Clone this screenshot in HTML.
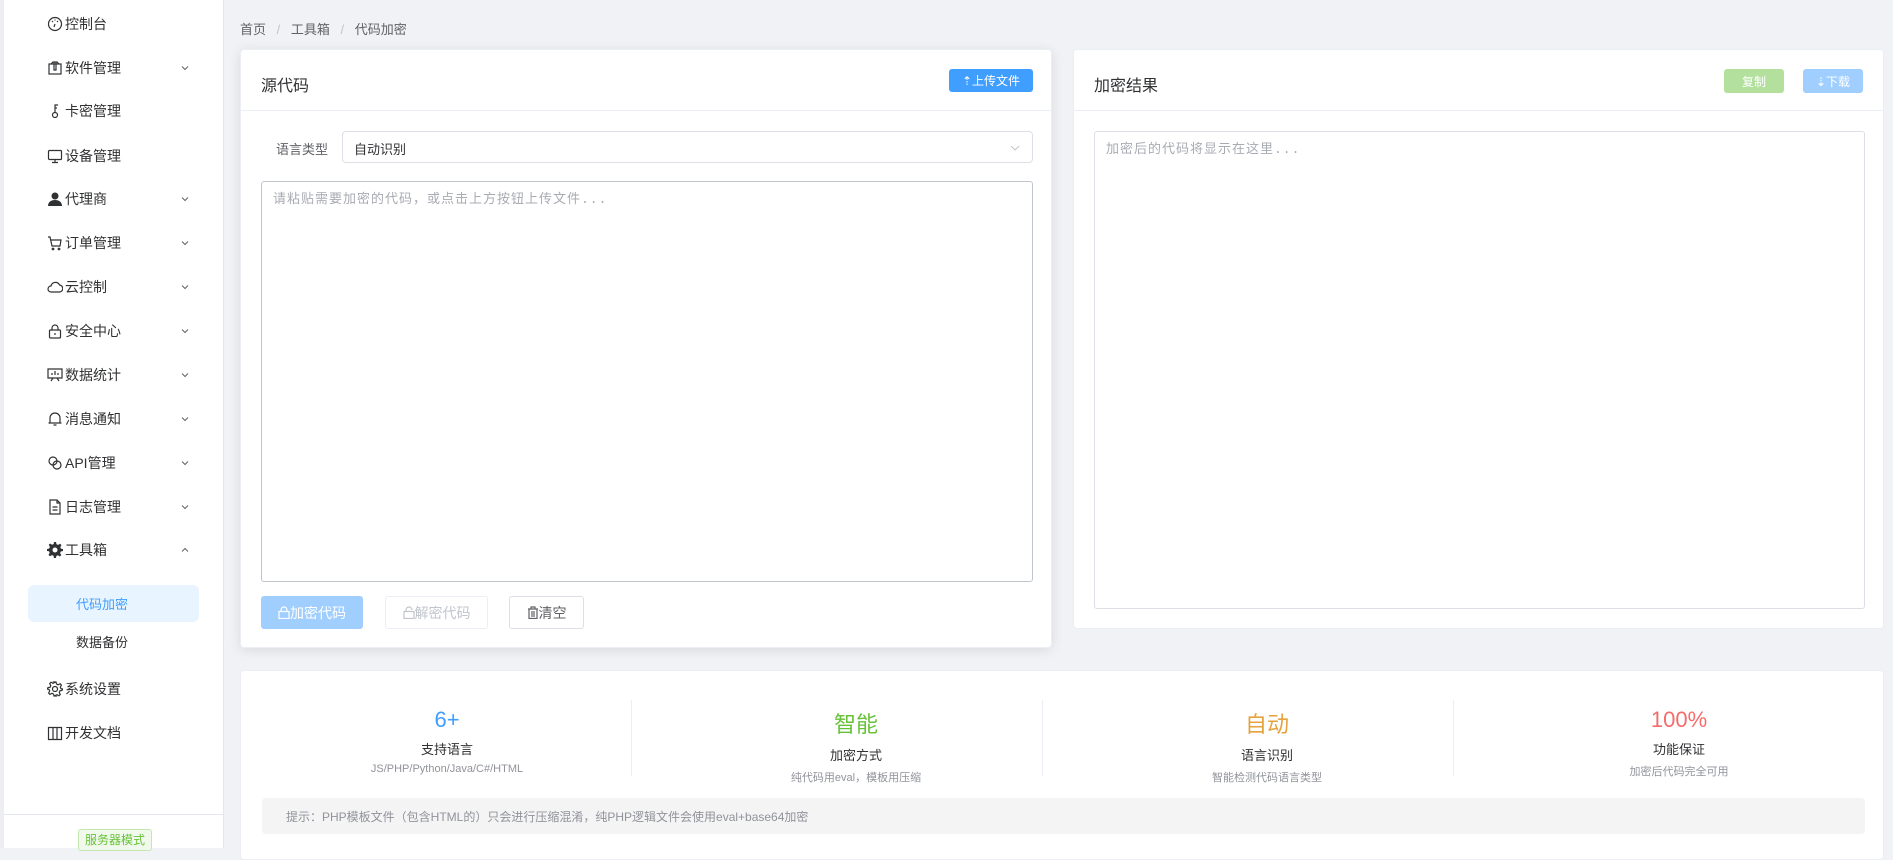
<!DOCTYPE html>
<html><head><meta charset="utf-8"><style>
*{box-sizing:border-box;margin:0;padding:0}
body{width:1893px;height:848px;overflow:hidden;background:#f0f2f5;font-family:"Liberation Sans","Noto Sans CJK SC",sans-serif;color:#303133;position:relative;font-size:14px}
.side{position:absolute;left:0;top:0;width:224px;height:848px;background:#fff;border-left:4px solid #eceef2;border-right:1px solid #e6e6e6}
.mi{position:absolute;left:0;width:220px;height:40px;display:flex;align-items:center}
.mi svg{position:absolute;left:43px;width:16px;height:16px}
.mi span{position:absolute;left:61px;font-size:14px;color:#303133}
.mi .ch{position:absolute;left:176px;width:10px;height:10px}
.abs{position:absolute}
.card{position:absolute;background:#fff;border:1px solid #ebeef5;border-radius:4px}
.btn{position:absolute;border-radius:3px;font-size:12px;display:flex;align-items:center;justify-content:center}
.stat{position:absolute;width:400px;text-align:center}
.stat .n{font-size:22px}
.stat .l{font-size:13px;color:#303133;margin-top:6px}
.stat .s{font-size:11px;color:#909399;margin-top:5px}
.vd{position:absolute;top:700px;width:1px;height:76px;background:#ebeef5}
</style></head><body>
<div class="side">
<div class="mi" style="top:4px"><svg viewBox="0 0 16 16" fill="none" stroke="#303133" stroke-width="1.2"><circle cx="8" cy="8" r="6.5"/><path d="M8 8l-1 3M5 5l1 1M8 3.5v1M11 5l-1 1"/></svg><span>控制台</span></div>
<div class="mi" style="top:48px"><svg viewBox="0 0 16 16" fill="none" stroke="#303133" stroke-width="1.2"><rect x="2" y="4" width="12" height="10"/><path d="M4 4l2-2h4l2 2M7 2v8h2V2"/></svg><span>软件管理</span><svg class="ch" viewBox="0 0 10 10" fill="none" stroke="#606266"><path d="M2 3.5l3 3 3-3"/></svg></div>
<div class="mi" style="top:91px"><svg viewBox="0 0 16 16" fill="none" stroke="#303133" stroke-width="1.2"><circle cx="8" cy="12" r="2.5"/><path d="M8 9.5V2h3M8 5h2"/></svg><span>卡密管理</span></div>
<div class="mi" style="top:136px"><svg viewBox="0 0 16 16" fill="none" stroke="#303133" stroke-width="1.2"><rect x="1.5" y="2.5" width="13" height="9" rx="1"/><path d="M8 11.5v3M5 14.5h6"/></svg><span>设备管理</span></div>
<div class="mi" style="top:179px"><svg viewBox="0 0 16 16" fill="#303133"><circle cx="8" cy="5" r="3.5"/><path d="M1 15c0-4 3-6 7-6s7 2 7 6z"/></svg><span>代理商</span><svg class="ch" viewBox="0 0 10 10" fill="none" stroke="#606266"><path d="M2 3.5l3 3 3-3"/></svg></div>
<div class="mi" style="top:223px"><svg viewBox="0 0 16 16" fill="none" stroke="#303133" stroke-width="1.2"><path d="M1 2h2l2 9h8l1-6H4"/><circle cx="6" cy="14" r=".8"/><circle cx="12" cy="14" r=".8"/></svg><span>订单管理</span><svg class="ch" viewBox="0 0 10 10" fill="none" stroke="#606266"><path d="M2 3.5l3 3 3-3"/></svg></div>
<div class="mi" style="top:267px"><svg viewBox="0 0 16 16" fill="none" stroke="#303133" stroke-width="1.2"><path d="M4 13a3 3 0 010-6 4.5 4.5 0 018.5-1A3.5 3.5 0 0112 13z"/></svg><span>云控制</span><svg class="ch" viewBox="0 0 10 10" fill="none" stroke="#606266"><path d="M2 3.5l3 3 3-3"/></svg></div>
<div class="mi" style="top:311px"><svg viewBox="0 0 16 16" fill="none" stroke="#303133" stroke-width="1.2"><rect x="2.5" y="7" width="11" height="8" rx="1"/><path d="M5 7V5a3 3 0 016 0v2M8 10v2"/></svg><span>安全中心</span><svg class="ch" viewBox="0 0 10 10" fill="none" stroke="#606266"><path d="M2 3.5l3 3 3-3"/></svg></div>
<div class="mi" style="top:355px"><svg viewBox="0 0 16 16" fill="none" stroke="#303133" stroke-width="1.2"><path d="M1 2h14v9H1zM4 14l2-3M12 14l-2-3M5 8V6M8 8V4M11 8V6"/></svg><span>数据统计</span><svg class="ch" viewBox="0 0 10 10" fill="none" stroke="#606266"><path d="M2 3.5l3 3 3-3"/></svg></div>
<div class="mi" style="top:399px"><svg viewBox="0 0 16 16" fill="none" stroke="#303133" stroke-width="1.2"><path d="M3 12V7a5 5 0 0110 0v5zM1.5 12h13M6.5 14h3"/></svg><span>消息通知</span><svg class="ch" viewBox="0 0 10 10" fill="none" stroke="#606266"><path d="M2 3.5l3 3 3-3"/></svg></div>
<div class="mi" style="top:443px"><svg viewBox="0 0 16 16" fill="none" stroke="#303133" stroke-width="1.2"><circle cx="6" cy="6" r="4"/><circle cx="10" cy="10" r="4"/></svg><span>API管理</span><svg class="ch" viewBox="0 0 10 10" fill="none" stroke="#606266"><path d="M2 3.5l3 3 3-3"/></svg></div>
<div class="mi" style="top:487px"><svg viewBox="0 0 16 16" fill="none" stroke="#303133" stroke-width="1.2"><path d="M3 1h7l3 3v11H3zM10 1v3h3M5.5 8h5M5.5 11h5"/></svg><span>日志管理</span><svg class="ch" viewBox="0 0 10 10" fill="none" stroke="#606266"><path d="M2 3.5l3 3 3-3"/></svg></div>
<div class="mi" style="top:530px"><svg viewBox="0 0 16 16" fill="#303133"><path d="M7 0h2l.5 2.2 1.6.7 2-1.2 1.4 1.4-1.2 2 .7 1.6L16 7v2l-2.2.5-.7 1.6 1.2 2-1.4 1.4-2-1.2-1.6.7L9 16H7l-.5-2.2-1.6-.7-2 1.2-1.4-1.4 1.2-2-.7-1.6L0 9V7l2.2-.5.7-1.6-1.2-2 1.4-1.4 2 1.2 1.6-.7z"/><circle cx="8" cy="8" r="2.5" fill="#fff"/></svg><span>工具箱</span><svg class="ch" viewBox="0 0 10 10" fill="none" stroke="#606266"><path d="M2 6.5l3-3 3 3"/></svg></div>
<div class="abs" style="left:24px;top:585px;width:171px;height:37px;background:#e8f4ff;border-radius:6px"></div>
<div class="abs" style="left:72px;top:594px;font-size:13px;color:#409eff">代码加密</div>
<div class="abs" style="left:72px;top:632px;font-size:13px;color:#303133">数据备份</div>
<div class="mi" style="top:669px"><svg viewBox="0 0 16 16" fill="none" stroke="#303133" stroke-width="1.2"><circle cx="8" cy="8" r="2.5"/><path d="M7 1h2l.5 2 1.6.8 2-1.1 1.3 1.4-1.1 2 .7 1.6L16 8l-1.1 1.4-2 .4-.7 1.6 1.1 2-1.3 1.4-2-1.1-1.6.7L9 15H7l-.5-2-1.6-.7-2 1.1-1.3-1.4 1.1-2-.7-1.6L0 8l1.1-1.4 2-.4.7-1.6-1.1-2 1.3-1.4 2 1.1 1.6-.8z"/></svg><span>系统设置</span></div>
<div class="mi" style="top:713px"><svg viewBox="0 0 16 16" fill="none" stroke="#303133" stroke-width="1.2"><path d="M1.5 2.5h13v12h-13zM6 2.5v12M10 2.5v12"/></svg><span>开发文档</span></div>
<div class="abs" style="left:0;top:814px;width:220px;height:1px;background:#e4e7ed"></div>
<div class="abs" style="left:74px;top:829px;width:74px;height:22px;background:#f0f9eb;border:1px solid #c2e7b0;border-radius:3px;color:#67c23a;font-size:12px;text-align:center;line-height:20px">服务器模式</div>
</div>

<div class="abs" style="left:240px;top:19px;font-size:13px;color:#606266">首页 <span style="color:#c0c4cc;margin:0 7px">/</span> 工具箱 <span style="color:#c0c4cc;margin:0 7px">/</span> 代码加密</div>

<div class="card" style="left:240px;top:49px;width:812px;height:599px;box-shadow:0 2px 12px rgba(0,0,0,.1)">
<div class="abs" style="left:0;top:60px;width:100%;height:1px;background:#ebeef5"></div>
<div class="abs" style="left:20px;top:22px;font-size:16px">源代码</div>
<div class="btn" style="left:708px;top:19px;width:84px;height:23px;background:#409eff;color:#fff">⇡上传文件</div>
<div class="abs" style="left:35px;top:89px;font-size:13px;color:#606266">语言类型</div>
<div class="abs" style="left:101px;top:81px;width:691px;height:32px;border:1px solid #dcdfe6;border-radius:4px;font-size:13px;padding:7px 11px;color:#303133">自动识别<svg style="position:absolute;right:12px;top:11px" width="10" height="10" viewBox="0 0 10 10" fill="none" stroke="#c0c4cc"><path d="M1 3l4 4 4-4"/></svg></div>
<div class="abs" style="left:20px;top:131px;width:772px;height:401px;border:1px solid #c0c4cc;border-radius:3px;font-family:'Liberation Mono','Noto Sans CJK SC',monospace;font-size:13px;letter-spacing:1px;color:#a8abb2;padding:6px 11px">请粘贴需要加密的代码，或点击上方按钮上传文件...</div>
<div class="btn" style="left:20px;top:546px;width:102px;height:33px;background:#a0cfff;color:#fff;font-size:14px"><svg width="12" height="13" viewBox="0 0 12 13" fill="none" stroke="#fff" stroke-width="1.2"><rect x="1" y="5.5" width="10" height="7"/><path d="M3 5.5V4a3 3 0 016 0v1.5"/></svg>加密代码</div>
<div class="btn" style="left:144px;top:546px;width:103px;height:33px;border:1px solid #ebeef5;color:#c0c4cc;font-size:14px"><svg width="12" height="13" viewBox="0 0 12 13" fill="none" stroke="#c0c4cc" stroke-width="1.2"><rect x="1" y="5.5" width="10" height="7"/><path d="M3 5.5V4a3 3 0 016 0"/></svg>解密代码</div>
<div class="btn" style="left:268px;top:546px;width:75px;height:33px;border:1px solid #dcdfe6;color:#606266;font-size:14px"><svg width="12" height="13" viewBox="0 0 12 13" fill="none" stroke="#606266" stroke-width="1.2"><path d="M1 3h10M4 3V1h4v2M2 3v9.5h8V3M5 5v6M7 5v6"/></svg>清空</div>
</div>

<div class="card" style="left:1073px;top:49px;width:811px;height:580px">
<div class="abs" style="left:0;top:60px;width:100%;height:1px;background:#ebeef5"></div>
<div class="abs" style="left:20px;top:22px;font-size:16px">加密结果</div>
<div class="btn" style="left:650px;top:19px;width:60px;height:24px;background:#b3e19d;color:#fff">复制</div>
<div class="btn" style="left:729px;top:19px;width:60px;height:24px;background:#a0cfff;color:#fff">⇣下载</div>
<div class="abs" style="left:20px;top:81px;width:771px;height:478px;border:1px solid #dcdfe6;border-radius:3px;font-family:'Liberation Mono','Noto Sans CJK SC',monospace;font-size:13px;letter-spacing:1px;color:#a8abb2;padding:6px 11px">加密后的代码将显示在这里...</div>
</div>

<div class="card" style="left:240px;top:670px;width:1644px;height:190px">
<div class="abs" style="left:21px;top:127px;width:1603px;height:36px;background:#f4f4f5;border-radius:4px;font-size:12px;color:#909399;padding:10px 24px">提示：PHP模板文件（包含HTML的）只会进行压缩混淆，纯PHP逻辑文件会使用eval+base64加密</div>
</div>
<div class="vd" style="left:631px"></div><div class="vd" style="left:1042px"></div><div class="vd" style="left:1453px"></div>
<div class="stat" style="left:247px;top:707px"><div class="n" style="color:#409eff">6+</div><div class="l">支持语言</div><div class="s">JS/PHP/Python/Java/C#/HTML</div></div>
<div class="stat" style="left:656px;top:707px"><div class="n" style="color:#67c23a">智能</div><div class="l">加密方式</div><div class="s">纯代码用eval，模板用压缩</div></div>
<div class="stat" style="left:1067px;top:707px"><div class="n" style="color:#e6a23c">自动</div><div class="l">语言识别</div><div class="s">智能检测代码语言类型</div></div>
<div class="stat" style="left:1479px;top:707px"><div class="n" style="color:#f56c6c">100%</div><div class="l">功能保证</div><div class="s">加密后代码完全可用</div></div>
</body></html>
